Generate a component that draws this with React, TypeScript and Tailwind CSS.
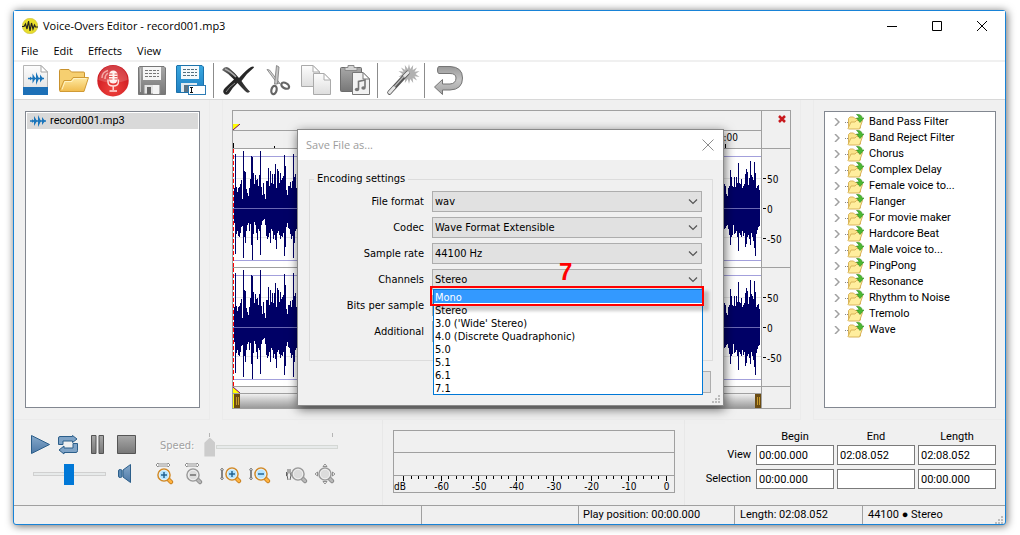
import React, { useState } from 'react';

const effects = [
  'Band Pass Filter',
  'Band Reject Filter',
  'Chorus',
  'Complex Delay',
  'Female voice to...',
  'Flanger',
  'For movie maker',
  'Hardcore Beat',
  'Male voice to...',
  'PingPong',
  'Resonance',
  'Rhythm to Noise',
  'Tremolo',
  'Wave',
];

const channelOptions = [
  'Mono',
  'Stereo',
  "3.0 ('Wide' Stereo)",
  '4.0 (Discrete Quadraphonic)',
  '5.0',
  '5.1',
  '6.1',
  '7.1',
];

// Sample peaks above and below the zero line, one per pixel column
const headUp = [
  0, 20, 54, 21, 16, 20, 21, 24, 28, 9, 57, 37, 36, 19, 15, 12, 20, 29, 52, 51, 35, 24, 33, 28, 29, 22, 33, 57, 21, 13,
  25, 14, 9, 27, 27, 40, 22, 37, 25, 34, 24, 34, 44, 20, 39, 37, 25, 35, 28, 30, 32, 53, 42, 18, 13, 22, 22, 26, 20,
  27, 54, 31, 34, 20, 18,
];
const headDown = [
  0, 14, 45, 25, 22, 27, 28, 24, 18, 17, 49, 28, 34, 22, 16, 14, 22, 15, 36, 51, 25, 13, 16, 24, 31, 20, 22, 46, 16,
  12, 11, 10, 16, 27, 30, 28, 24, 34, 20, 22, 30, 26, 31, 40, 24, 22, 26, 30, 27, 28, 24, 47, 38, 18, 14, 19, 20, 25,
  30, 27, 49, 34, 22, 20, 18,
];
const tailUp = [
  28, 24, 22, 14, 12, 20, 22, 38, 31, 22, 21, 31, 21, 31, 25, 45, 25, 24, 29, 20, 22, 24, 34, 39, 36, 23, 30, 47, 33,
  31, 28, 46, 35, 20, 22, 23, 18,
];
const tailDown = [
  28, 20, 19, 17, 16, 20, 26, 36, 28, 26, 16, 25, 24, 22, 28, 42, 24, 26, 28, 22, 27, 24, 38, 35, 28, 26, 30, 36, 24,
  28, 32, 39, 47, 25, 21, 18, 17,
];

const buildWave = () => {
  const bars: [number, number][] = [];
  const total = 527;
  for (let i = 0; i < total; i++) {
    const fromEnd = i - (total - tailUp.length);
    if (i < headUp.length) {
      bars.push([headUp[i], headDown[i]]);
    } else if (fromEnd >= 0) {
      bars.push([tailUp[fromEnd], tailDown[fromEnd]]);
    } else {
      bars.push([headUp[1 + ((i * 7) % 63)], headDown[1 + ((i * 5) % 63)]]);
    }
  }
  return bars.map(([up, down], i) => `M${i + 0.5} ${59 - up}V${60 + down}`).join('');
};

const wavePath = buildWave();

const Waveform: React.FC = () => (
  <svg
    className="block h-full w-full"
    viewBox="0 0 528 118"
    preserveAspectRatio="none"
    shapeRendering="crispEdges"
  >
    <rect width="528" height="118" fill="#fff" />
    <path d="M0 29.5H528M0 88.5H528" stroke="#e8e8e8" />
    <path d="M0 7.5H528M0 111.5H528" stroke="#a3a0dc" />
    <path d={wavePath} stroke="#000066" />
    <path d="M0 59.5H527" stroke="#6a68b4" />
    <path d="M0.5 0V118" stroke="#ff0000" strokeDasharray="4 2" />
  </svg>
);

const ScaleLabels: React.FC = () => (
  <div className="flex h-full flex-col justify-center">
    {['50', '0', '-50'].map((label) => (
      <div key={label} className="flex h-[30px] items-center gap-px">
        <span className="h-px w-[3px] bg-black" />
        <span className="pt-1 leading-3">{label}</span>
      </div>
    ))}
  </div>
);

const SoundGlyph: React.FC<{ className?: string }> = ({ className }) => (
  <svg className={className} viewBox="0 0 16 12">
    <path d="M0 6h16" stroke="#1a75bb" strokeWidth="1.500" />
    <path d="M2 4l2 2-2 2zM4 1l3 5-3 5zM8 0l3 6-3 6zM12 2l3 4-3 4z" fill="#1a75bb" />
  </svg>
);

const Gradients: React.FC = () => (
  <svg className="absolute h-0 w-0" aria-hidden="true">
    <defs>
      <linearGradient id="folder" x1="0" y1="0" x2="0" y2="1">
        <stop offset="0" stopColor="#ffeaa3" />
        <stop offset="1" stopColor="#f0bb4d" />
      </linearGradient>
      <linearGradient id="metal" x1="0" y1="0" x2="0" y2="1">
        <stop offset="0" stopColor="#a8a8a8" />
        <stop offset="1" stopColor="#777" />
      </linearGradient>
      <linearGradient id="silver" x1="0" y1="0" x2="0" y2="1">
        <stop offset="0" stopColor="#9a9a9a" />
        <stop offset="0.500" stopColor="#c4c4c4" />
        <stop offset="1" stopColor="#a2a2a2" />
      </linearGradient>
      <linearGradient id="blueDisk" x1="0" y1="0" x2="0" y2="1">
        <stop offset="0" stopColor="#3aa8e0" />
        <stop offset="1" stopColor="#1f7fc2" />
      </linearGradient>
      <linearGradient id="paper" x1="0" y1="0" x2="0" y2="1">
        <stop offset="0" stopColor="#fdfdfd" />
        <stop offset="1" stopColor="#dedede" />
      </linearGradient>
      <linearGradient id="steel" x1="0" y1="0" x2="0" y2="1">
        <stop offset="0" stopColor="#87aacb" />
        <stop offset="1" stopColor="#4d78a6" />
      </linearGradient>
      <linearGradient id="dark" x1="0" y1="0" x2="1" y2="1">
        <stop offset="0" stopColor="#777" />
        <stop offset="0.400" stopColor="#222" />
        <stop offset="1" stopColor="#444" />
      </linearGradient>
      <radialGradient id="red" cx="0.500" cy="0.750" r="0.700">
        <stop offset="0" stopColor="#f0453f" />
        <stop offset="1" stopColor="#c9141c" />
      </radialGradient>
    </defs>
  </svg>
);

const NewIcon = (
  <>
    <path d="M4.500 0.500H22L28.500 7V29.500H4.500Z" fill="url(#paper)" stroke="#b5b5b5" />
    <path d="M22 0.500V7H28.500Z" fill="#fff" stroke="#a5a5a5" />
    <path d="M4 22H29V30H4Z" fill="#1d70b7" />
    <path d="M9 13.500H25" stroke="#1a75bb" strokeWidth="1.500" />
    <path d="M11 11.500l2 2-2 2zM13.500 8.500l3 5-3 5zM17 7l3 6.500-3 6.500zM21 9.500l3 4-3 4z" fill="#1a75bb" />
  </>
);

const FolderIcon = (
  <>
    <path d="M1.500 25V5.500Q1.500 4.500 2.500 4.500H11L13.500 7H25.500Q26.500 7 26.500 8V12" fill="#f6cf70" stroke="#c9922e" />
    <path d="M1.500 26L6 15.500H13L15 12.500H30.500L26 26.500H2Z" fill="url(#folder)" stroke="#d09a35" />
    <path d="M4 24.500L7 16.500H14L16 13.500H28" fill="none" stroke="#fff3c4" />
  </>
);

const RecordIcon = (
  <>
    <circle cx="16" cy="15.700" r="15.700" fill="url(#red)" />
    <path d="M1.500 15A14.500 14.500 0 0 1 30.500 15Q16 21 1.500 15Z" fill="#fff" opacity="0.180" />
    <rect x="12" y="5.500" width="8.500" height="13" rx="4.200" fill="#fff3f0" />
    <path d="M12 9h3.500M17.500 9h3M12 11.500h3.500M17.500 11.500h3M12 14h3.500M17.500 14h3" stroke="#e0504c" />
    <path d="M11 14.500v2.500q0 4 5.200 4t5.200-4v-2.500M16.200 21v4M12.500 26h7.500" stroke="#ffe2df" strokeWidth="1.400" fill="none" />
    <path d="M5 13Q5 7 11 5.500M8 14Q8 10 11 8" stroke="#f5a9a5" strokeWidth="1.500" fill="none" />
  </>
);

const SaveIcon = (
  <>
    <path d="M3.500 1.500H28L29.500 3V29.500H2.500V2.500Z" fill="url(#metal)" stroke="#777" />
    <rect x="7" y="2" width="18" height="13" fill="#f6f6f6" />
    <path d="M9 5.500h14M9 8.500h14M9 11.500h14" stroke="#777" strokeDasharray="3 1" />
    <path d="M8 29V19.500H24V29Z" fill="#e3e3e3" stroke="#888" />
    <rect x="11" y="22" width="4" height="7" fill="#666" />
    <path d="M17 29V20H23V29Z" fill="#f4f4f4" />
    <path d="M4.500 27V3.500" stroke="#c2c2c2" />
  </>
);

const SaveAsIcon = (
  <>
    <path d="M2 0.500H27L28.500 2V27.500H1.500V1Z" fill="url(#blueDisk)" stroke="#1c72ab" />
    <rect x="6" y="1" width="18" height="13" fill="#f4f9fc" />
    <path d="M8 4.500h14M8 7.500h14M8 10.500h14" stroke="#54707f" strokeDasharray="3 1" />
    <path d="M6 27V18H22V27Z" fill="#dfe9ef" />
    <rect x="9" y="20" width="4" height="7" fill="#5b7383" />
    <rect x="13.500" y="20.500" width="17" height="9" fill="#fff" stroke="#2d7cb5" />
    <path d="M15 22.500h3M15 27.500h3M16.500 22.500v5" stroke="#111" />
  </>
);

const DeleteIcon = (
  <>
    <path
      d="M0 5Q3 0 7 3Q12 7 17 13Q24 5 29 2Q32 1 32 2.500Q25 8 19.500 16Q24 23 28 26.500Q26 29 23 26Q19 22 15.500 18Q10 23 7 28.500Q4 31 2 28.500Q0 26 3 23Q7 19 12 14.500Q6 8 0 5Z"
      fill="url(#dark)"
    />
    <path d="M3 4Q8 6 14 12" stroke="#aaa" strokeWidth="1.500" fill="none" />
    <path d="M4 27Q7 22 13 18" stroke="#888" fill="none" />
  </>
);

const CutIcon = (
  <>
    <path d="M6 4.500L8.500 5L19 18.500L16 18Z" fill="#d5d5d5" stroke="#777" strokeWidth="0.800" />
    <path d="M15.500 0.500L18 2L16.500 19L13.500 19Z" fill="#c7c7c7" stroke="#777" strokeWidth="0.800" />
    <ellipse cx="13" cy="25" rx="2.600" ry="4.200" fill="none" stroke="#666" strokeWidth="2.200" transform="rotate(12 13 25)" />
    <ellipse cx="24.500" cy="20.500" rx="4.200" ry="2.600" fill="none" stroke="#666" strokeWidth="2.200" transform="rotate(28 24 20)" />
  </>
);

const CopyIcon = (
  <>
    <path d="M1.500 0.500H13L19.500 7V21.500H1.500Z" fill="url(#paper)" stroke="#aaa" />
    <path d="M13 0.500V7H19.500Z" fill="#fff" stroke="#aaa" />
    <path d="M13.500 8.500H24L30.500 15V29.500H13.500Z" fill="url(#paper)" stroke="#aaa" />
    <path d="M24 8.500V15H30.500Z" fill="#fff" stroke="#aaa" />
  </>
);

const PasteIcon = (
  <>
    <rect x="1.500" y="2.500" width="21" height="24" rx="1" fill="url(#metal)" stroke="#6d6d6d" />
    <path d="M6 5.500V2.500H9V0.500H15V2.500H18V5.500Z" fill="#d4d4d4" stroke="#888" />
    <path d="M13.500 7.500H24L30.500 14V29.500H13.500Z" fill="#f2f2f2" stroke="#777" />
    <path d="M24 7.500V14H30.500Z" fill="#fff" stroke="#777" />
    <path d="M19.500 24V16.500L26 15V22.500" stroke="#777" strokeWidth="1.600" fill="none" />
    <ellipse cx="18" cy="24.500" rx="2.200" ry="1.700" fill="#777" />
    <ellipse cx="24.500" cy="23" rx="2.200" ry="1.700" fill="#777" />
  </>
);

const WandIcon = (
  <>
    <path
      d="M23 -1l1.200 5 3-4-.5 5 4.300-2.500-2.500 4.200 5-.7-4 3 4 3-5-.7 2.500 4.200-4.300-2.500.5 5-3-4-1.200 5-1.200-5-3 4 .5-5-4.300 2.500 2.500-4.200-5 .7 4-3-4-3 5 .7-2.500-4.200 4.300 2.500-.5-5 3 4z"
      fill="#b2b2b2"
    />
    <path d="M3.500 27.500L21.500 8" stroke="#555" strokeWidth="4.500" strokeLinecap="round" />
    <path d="M3.500 27.500L8 22.500M18.500 11L22 7.500" stroke="#e6e6e6" strokeWidth="3" strokeLinecap="round" />
    <path d="M8.500 21.500L18 11" stroke="#bbb" strokeWidth="1.200" />
  </>
);

const UndoIcon = (
  <path
    d="M6 1.500H17Q29.500 2 29.500 13Q29.500 24.500 17 25H9.500V29.500L1.500 22L9.500 14.500V19H17Q23 18.500 23 13Q23 8.500 17 8.500H6Q4.500 8.500 4.500 5Q4.500 1.500 6 1.500Z"
    fill="url(#silver)"
    stroke="#757575"
  />
);

const SmallSpeakerIcon = (
  <svg className="h-5 w-4" viewBox="0 0 16 20">
    <path d="M5 6L12.500 0.500V18.500L5 13Z" fill="url(#steel)" stroke="#2b5e8a" />
    <rect x="0.500" y="5.500" width="3.500" height="8" rx="1.500" fill="#5f8bb4" stroke="#2b5e8a" />
  </svg>
);

interface LensProps {
  active?: boolean;
  sign?: 'plus' | 'minus';
  arrow?: 'horizontal' | 'vertical' | 'wave' | 'around';
}

const LensIcon: React.FC<LensProps> = ({ active, sign, arrow }) => {
  const ring = active ? '#d28a28' : '#9b9b9b';
  const cx = arrow === 'horizontal' ? 8 : arrow === 'around' ? 10 : 12;
  const cy = arrow === 'horizontal' ? 11 : 10;
  return (
    <svg className="h-5 w-[21px] overflow-visible" viewBox="0 0 21 20">
      {arrow === 'horizontal' && (
        <path d="M0 1L2 -1V0H12V-1L14 1L12 3V2H2V3Z" fill="#fff" stroke="#777" strokeWidth="0.800" />
      )}
      {arrow === 'vertical' && (
        <path d="M2 4L3.500 6H2.500V14H3.500L2 16L.5 14H1.500V6H.5Z" fill="#fff" stroke="#666" strokeWidth="0.800" />
      )}
      {arrow === 'wave' && (
        <path d="M.5 8v4M2 5v4l-1 2 1 5M4 5v4l1 2-1 5M6 8v4" stroke="#555" fill="none" strokeWidth="0.900" />
      )}
      {arrow === 'around' && (
        <path
          d="M8 2.500L10 0l2 2.500zM8 17.500l2 2.500 2-2.500zM2.500 8L0 10l2.500 2zM17.500 8l2.500 2-2.500 2z"
          fill="#fff"
          stroke="#777"
          strokeWidth="0.800"
        />
      )}
      <path d={`M${cx + 5} ${cy + 5}l2 2`} stroke={active ? '#c87f20' : '#8a8a8a'} strokeWidth="4.500" strokeLinecap="round" />
      <path d={`M${cx + 5} ${cy + 5}l2 2`} stroke={active ? '#ffb340' : '#b8b8b8'} strokeWidth="2.500" strokeLinecap="round" />
      <circle cx={cx} cy={cy} r="6" fill={active ? '#b4e4ff' : '#dcdcdc'} stroke={ring} strokeWidth="1.600" />
      <circle cx={cx} cy={cy} r="4.800" fill="none" stroke="#f6f6f6" strokeWidth="0.800" />
      {sign && <path d={`M${cx - 3} ${cy}h6`} stroke={active ? '#1c5c8c' : '#666'} strokeWidth="1.400" />}
      {sign === 'plus' && <path d={`M${cx} ${cy - 3}v6`} stroke="#1c5c8c" strokeWidth="1.400" />}
    </svg>
  );
};

interface ToolButtonProps {
  label: string;
  children: React.ReactNode;
}

const ToolButton: React.FC<ToolButtonProps> = ({ label, children }) => (
  <button type="button" aria-label={label} className="w-[39px] shrink-0 pt-px pl-[3px]">
    <svg className="block h-8 w-8 overflow-visible" viewBox="0 0 32 32">
      {children}
    </svg>
  </button>
);

const ToolDivider: React.FC = () => (
  <div className="flex w-2 shrink-0 py-px pl-0.5">
    <div className="w-px bg-[#8c8c8c]" />
  </div>
);

const Grip: React.FC = () => (
  <svg className="h-2 w-2" viewBox="0 0 8 8" fill="#bcbcbc">
    <path d="M6 0h2v2H6zM3 3h2v2H3zM6 3h2v2H6zM0 6h2v2H0zM3 6h2v2H3zM6 6h2v2H6z" />
  </svg>
);

interface FieldProps {
  id: string;
  label: string;
  options: string[];
  value?: string;
}

const SelectField: React.FC<FieldProps> = ({ id, label, options, value }) => (
  <>
    <label htmlFor={id} className="pt-px text-right">
      {label}
    </label>
    <div className="relative">
      <select
        id={id}
        defaultValue={value}
        className="block h-[21px] w-full appearance-none border border-[#adadad] bg-[#e1e1e1] px-0.5 pt-px outline-none"
      >
        {options.map((option) => (
          <option key={option}>{option}</option>
        ))}
      </select>
      <svg className="pointer-events-none absolute top-2 right-1 h-[6px] w-[10px]" viewBox="0 0 10 6">
        <path d="M1 0.500L5 4.500L9 0.500" fill="none" stroke="#555" strokeWidth="1.200" />
      </svg>
    </div>
  </>
);

const SaveDialog: React.FC = () => {
  const [channel, setChannel] = useState('Mono');

  return (
    <div
      role="dialog"
      aria-label="Save File as..."
      className="absolute top-[118px] left-[283px] flex h-[277px] w-[427px] flex-col border border-[#8a8a8a] bg-[#f0f0f0] font-['DejaVu_Sans_Condensed','Noto_Sans',sans-serif] text-[11px] shadow-[1px_3px_10px_rgba(0,0,0,0.6)]"
    >
      <div className="flex h-[30px] items-center justify-between bg-white pr-[9px] pl-2">
        <h2 className="font-['Open_Sans',sans-serif] text-[#9c9c9c]">Save File as...</h2>
        <button type="button" aria-label="Close dialog">
          <svg className="h-3 w-3" viewBox="0 0 12 12">
            <path d="M0.500 0.500L11.500 11.500M11.500 0.500L0.500 11.500" stroke="#8c8c8c" />
          </svg>
        </button>
      </div>

      <fieldset className="mr-[10px] ml-[11px] mt-[11px] border border-[#dcdcdc] pr-[10px] pb-[18px]">
        <legend className="ml-1 px-[3px] leading-4">Encoding settings</legend>
        <div className="mt-1 grid grid-cols-[114px_1fr] items-center gap-x-2 gap-y-[5px]">
          <SelectField id="format" label="File format" options={['wav', 'mp3']} />
          <SelectField id="codec" label="Codec" options={['Wave Format Extensible']} />
          <SelectField id="rate" label="Sample rate" options={['44100 Hz', '48000 Hz']} />
          <SelectField id="channels" label="Channels" options={channelOptions} value="Stereo" />
          <SelectField id="bits" label="Bits per sample" options={['16']} />
          <SelectField id="additional" label="Additional" options={['None']} />
        </div>
      </fieldset>

      <div className="mt-[10px] flex justify-end pr-3">
        <button type="button" className="h-[22px] w-[75px] border border-[#adadad] bg-[#e1e1e1]">
          Cancel
        </button>
      </div>
      <div className="absolute right-[3px] bottom-0.5">
        <Grip />
      </div>

      {/* Opened channel list */}
      <ul
        role="listbox"
        aria-label="Channels"
        className="absolute top-[159px] left-[135px] w-[270px] border border-[#0078d7] bg-white"
      >
        {channelOptions.map((option) => (
          <li
            key={option}
            role="option"
            aria-selected={option === channel}
            onClick={() => setChannel(option)}
            className={`h-[13px] px-px leading-[15px] ${option === channel ? 'bg-[#3399ff] text-white' : 'text-black'}`}
          >
            {option}
          </li>
        ))}
      </ul>
      <div className="pointer-events-none absolute top-[156px] left-[132px] h-5 w-[274px] border-2 border-[#ff0000] shadow-[5px_5px_3px_rgba(0,0,0,0.2)]" />
      <span className="absolute top-[130px] left-[261px] font-['Liberation_Sans',sans-serif] text-2xl leading-6 font-bold text-[#ff0000]">
        7
      </span>
    </div>
  );
};

const TitleBar: React.FC = () => (
  <header className="bg-white font-['Open_Sans',sans-serif] text-[11px]">
    <div className="flex h-[30px] items-center">
      <svg className="ml-2 h-4 w-4" viewBox="0 0 16 16">
        <circle cx="8" cy="8" r="7.700" fill="#e8de2b" stroke="#c9c04a" strokeWidth="0.600" />
        <path d="M0 8.500h2L3.500 6l1.500 5L6.500 3l1.500 10L9.500 5l1.500 6 1.500-4L13.500 9H16" stroke="#222" strokeWidth="1.200" fill="none" />
      </svg>
      <h1 className="ml-[5px] flex-1">Voice-Overs Editor - record001.mp3</h1>
      <button type="button" aria-label="Minimize" className="flex w-[45px] justify-center">
        <svg className="h-[10px] w-[10px]" viewBox="0 0 10 10">
          <path d="M0 5.500H10" stroke="#000" />
        </svg>
      </button>
      <button type="button" aria-label="Maximize" className="flex w-[45px] justify-center">
        <svg className="h-[10px] w-[10px]" viewBox="0 0 10 10">
          <path d="M0.500 0.500H9.500V9.500H0.500Z" fill="none" stroke="#000" />
        </svg>
      </button>
      <button type="button" aria-label="Close" className="flex w-[46px] justify-center">
        <svg className="h-[10px] w-[10px]" viewBox="0 0 10 10">
          <path d="M0 0L10 10M10 0L0 10" stroke="#000" />
        </svg>
      </button>
    </div>
    <nav className="flex h-[21px] items-center gap-[15px] border-b-2 border-[#f0f0f0] pt-px pl-[7px]">
      {['File', 'Edit', 'Effects', 'View'].map((item) => (
        <button key={item} type="button">
          {item}
        </button>
      ))}
    </nav>
  </header>
);

const Toolbar: React.FC = () => (
  <div className="flex h-[38px] border-b border-[#d8d8d8] bg-white pl-0.5">
    <ToolButton label="New">{NewIcon}</ToolButton>
    <ToolButton label="Open">{FolderIcon}</ToolButton>
    <ToolButton label="Record">{RecordIcon}</ToolButton>
    <ToolButton label="Save">{SaveIcon}</ToolButton>
    <ToolButton label="Save as">{SaveAsIcon}</ToolButton>
    <ToolDivider />
    <ToolButton label="Delete">{DeleteIcon}</ToolButton>
    <ToolButton label="Cut">{CutIcon}</ToolButton>
    <ToolButton label="Copy">{CopyIcon}</ToolButton>
    <ToolButton label="Paste">{PasteIcon}</ToolButton>
    <ToolDivider />
    <ToolButton label="Effects wizard">{WandIcon}</ToolButton>
    <ToolDivider />
    <ToolButton label="Undo">{UndoIcon}</ToolButton>
  </div>
);

const ScrollHandle: React.FC = () => (
  <div className="flex w-[6px] justify-center gap-px bg-[#6b4c12] py-[3px]">
    <div className="w-px bg-[#c79a2a]" />
    <div className="w-px bg-[#c79a2a]" />
  </div>
);

const Editor: React.FC = () => (
  <div className="flex w-full border border-[#a0a0a0] font-['DejaVu_Sans_Condensed',sans-serif] text-[10px]">
    <div className="flex min-w-0 flex-1 flex-col border-r border-[#a0a0a0]">
      <div className="flex h-5 items-end border-b border-[#a0a0a0]">
        <svg className="h-[6px] w-[7px]" viewBox="0 0 7 6">
          <path d="M0 0H7L0 6Z" fill="#ffff00" />
          <path d="M7 0L0 6" stroke="#800060" />
        </svg>
      </div>
      <div className="flex h-[18px] items-end justify-between border-b border-[#a0a0a0] pr-[23px]">
        <div className="flex items-end gap-10">
          <span className="h-[5px] w-px bg-black" />
          <span className="h-0.5 w-px bg-black" />
        </div>
        <div className="flex flex-col items-center">
          <span className="leading-[13px]">02:00</span>
          <span className="h-1 w-px bg-black" />
        </div>
      </div>
      <div className="min-h-0 flex-1">
        <Waveform />
      </div>
      <div className="min-h-0 flex-1 border-t border-[#a0a0a0]">
        <Waveform />
      </div>
      <div className="h-[7px] border-t border-[#a0a0a0]">
        <svg className="block h-[6px] w-[7px]" viewBox="0 0 7 6">
          <path d="M0 0L7 6H0Z" fill="#ffff00" />
          <path d="M0 0L7 6" stroke="#800060" />
        </svg>
      </div>
      <div className="flex h-[15px] justify-between border-t border-[#a0a0a0] bg-linear-to-b from-[#f0f0f0] to-[#9a9a9a]">
        <div className="flex">
          <div className="w-px bg-[#ffff00]" />
          <ScrollHandle />
        </div>
        <ScrollHandle />
      </div>
    </div>
    <div className="flex w-7 flex-col">
      <div className="flex h-[38px] justify-center border-b border-[#a0a0a0] pt-1 pl-3">
        <button type="button" aria-label="Close track" className="h-2">
          <svg className="block h-2 w-2" viewBox="0 0 8 8">
            <path d="M1 1L7 7M7 1L1 7" stroke="#c8191e" strokeWidth="2.500" />
          </svg>
        </button>
      </div>
      <div className="min-h-0 flex-1 pl-px">
        <ScaleLabels />
      </div>
      <div className="min-h-0 flex-1 border-t border-[#a0a0a0] pl-px">
        <ScaleLabels />
      </div>
      <div className="h-[22px] border-t border-[#a0a0a0]" />
    </div>
  </div>
);

const EffectsTree: React.FC = () => (
  <ul className="w-full border border-[#828790] bg-white pt-0.5">
    {effects.map((effect) => (
      <li key={effect} className="flex h-4 items-center pl-[9px]">
        <svg className="h-2 w-[6px]" viewBox="0 0 6 8">
          <path d="M1 0L5 4L1 8" fill="none" stroke="#a0a0a0" strokeWidth="1.500" />
        </svg>
        <svg className="ml-1 h-4 w-5" viewBox="0 0 20 16">
          <path d="M1 8.500h1M3 8.500h1" stroke="#888" />
          <path d="M4.500 14V4.500L6 3H9.500L11 4.500H16.500V14Z" fill="#fbe38a" stroke="#d9b45a" />
          <path d="M4 14.500L7 8H11L12.500 6.500H18.500L15.500 15H4.500Z" fill="#ffee9e" stroke="#d9b45a" />
          <path d="M12.500 0.500Q18 0 18 4H20L16 8.500L12.500 4H15Q15 2 12.500 0.500Z" fill="#4cb832" stroke="#2d8c1e" strokeWidth="0.600" />
        </svg>
        <span className="ml-[5px]">{effect}</span>
      </li>
    ))}
  </ul>
);

const Transport: React.FC = () => (
  <div className="flex w-[368px] shrink-0 flex-col pt-3 pl-[17px]">
    <div className="flex h-[26px] items-center">
      <button type="button" aria-label="Play">
        <svg className="h-5 w-5" viewBox="0 0 20 20">
          <path d="M0.500 0.500L18.500 9.500L0.500 18.500Z" fill="url(#steel)" stroke="#2b5e8a" />
        </svg>
      </button>
      <button type="button" aria-label="Loop" className="ml-[7px]">
        <svg className="h-5 w-[21px]" viewBox="0 0 21 20">
          <path
            d="M0.500 9.500V3Q0.500 1.500 2 1.500H14.500V0.500L19 4L14.500 7.500V6H5V9.500ZM19.500 8.500V15.500Q19.500 17.500 18 17.500H6V19L1 15L6 11V13H15V8.500Z"
            fill="#7fa3c6"
            stroke="#2b5e8a"
          />
        </svg>
      </button>
      <button type="button" aria-label="Pause" className="ml-3">
        <svg className="h-5 w-[14px]" viewBox="0 0 14 20">
          <path d="M0.500 0.500H5V18.500H0.500ZM8 0.500H12.500V18.500H8Z" fill="url(#metal)" stroke="#555" />
        </svg>
      </button>
      <button type="button" aria-label="Stop" className="ml-3">
        <svg className="h-5 w-5" viewBox="0 0 20 20">
          <path d="M0.500 0.500H18.500V18.500H0.500Z" fill="url(#metal)" stroke="#555" />
        </svg>
      </button>
      <label
        htmlFor="speed"
        className="ml-[23px] pt-0.5 font-['DejaVu_Sans_Condensed',sans-serif] text-[11px] text-[#a0a0a0] [text-shadow:1px_1px_0_white]"
      >
        Speed:
      </label>
      <div className="ml-[10px] flex w-[134px] flex-col">
        <div className="flex justify-between px-[5px]">
          <span className="h-1 w-px bg-[#b5b5b5]" />
          <span className="h-1 w-px bg-[#b5b5b5]" />
        </div>
        <div className="relative flex items-center">
          <div className="absolute right-0 left-3 h-1 border border-[#d4d7d4] bg-[#e7eaea]" />
          <input
            id="speed"
            type="range"
            min="0"
            max="100"
            defaultValue="0"
            disabled
            className="relative h-5 w-full appearance-none bg-transparent [&::-webkit-slider-thumb]:h-[19px] [&::-webkit-slider-thumb]:w-[11px] [&::-webkit-slider-thumb]:appearance-none [&::-webkit-slider-thumb]:bg-[#cccccc] [&::-webkit-slider-thumb]:[clip-path:polygon(50%_0,100%_28%,100%_100%,0_100%,0_28%)]"
          />
        </div>
      </div>
    </div>
    <div className="mt-[5px] flex h-[22px] items-center">
      <div className="relative ml-0.5 flex w-[73px] items-center">
        <div className="absolute inset-x-0 h-1 border border-[#d0d0d0] bg-[#e7eaea]" />
        <input
          type="range"
          aria-label="Volume"
          min="0"
          max="100"
          defaultValue="49"
          className="relative h-[21px] w-full appearance-none bg-transparent [&::-webkit-slider-thumb]:h-[21px] [&::-webkit-slider-thumb]:w-[10px] [&::-webkit-slider-thumb]:appearance-none [&::-webkit-slider-thumb]:bg-[#0078d7]"
        />
      </div>
      <button type="button" aria-label="Mute" className="ml-3">
        {SmallSpeakerIcon}
      </button>
      <div className="ml-[22px] flex flex-1 gap-2">
        <button type="button" aria-label="Zoom in time">
          <LensIcon active sign="plus" arrow="horizontal" />
        </button>
        <button type="button" aria-label="Zoom out time">
          <LensIcon sign="minus" arrow="horizontal" />
        </button>
        <button type="button" aria-label="Zoom in level" className="ml-[6px]">
          <LensIcon active sign="plus" arrow="vertical" />
        </button>
        <button type="button" aria-label="Zoom out level">
          <LensIcon active sign="minus" arrow="vertical" />
        </button>
        <button type="button" aria-label="Zoom to selection" className="ml-2">
          <LensIcon arrow="wave" />
        </button>
        <button type="button" aria-label="Zoom to fit">
          <LensIcon arrow="around" />
        </button>
      </div>
    </div>
  </div>
);

const levelTicks = Array.from({ length: 36 }, (_, i) => {
  const x = Math.round(9 + i * 7.5) + 0.5;
  return `M${x} 0V${i % 5 === 0 ? 5 : 3}`;
}).join('');

const LevelMeter: React.FC = () => (
  <div className="min-w-0 flex-1 border-x border-[#e8e8e8] pt-[10px] pr-[9px] pl-[10px]">
    <div className="border border-[#a0a0a0]">
      <div className="h-[22px] border-b border-[#a0a0a0]" />
      <div className="h-[23px] border-b border-[#a0a0a0]" />
      <svg className="block h-[5px] w-full" viewBox="0 0 280 5" preserveAspectRatio="none" shapeRendering="crispEdges">
        <path d={levelTicks} stroke="#000" />
      </svg>
      <div className="flex h-[11px] items-center pr-[7px] font-['DejaVu_Sans_Condensed',sans-serif] text-[10px] leading-[11px]">
        <span className="w-[47px]">dB</span>
        <div className="flex flex-1 justify-between">
          {['-60', '-50', '-40', '-30', '-20', '-10', '0'].map((level) => (
            <span key={level} className="flex w-px justify-center">
              {level}
            </span>
          ))}
        </div>
      </div>
    </div>
  </div>
);

const timeRows = [
  { name: 'View', values: ['00:00.000', '02:08.052', '02:08.052'] },
  { name: 'Selection', values: ['00:00.000', '', '00:00.000'] },
];
const timeColumns = ['Begin', 'End', 'Length'];

const TimeFields: React.FC = () => (
  <div className="grid w-[320px] shrink-0 grid-cols-[1fr_78px_78px_78px] content-start items-center gap-x-[3px] gap-y-1 pt-[9px] pr-[9px]">
    <span />
    {timeColumns.map((column) => (
      <span key={column} className="h-3 text-center leading-4">
        {column}
      </span>
    ))}
    {timeRows.map((row) => (
      <React.Fragment key={row.name}>
        <span className="pr-0.5 text-right">{row.name}</span>
        {row.values.map((value, i) => (
          <input
            key={timeColumns[i]}
            type="text"
            aria-label={`${row.name} ${timeColumns[i]}`}
            defaultValue={value}
            className="h-5 w-full border border-[#7a7a7a] bg-white px-0.5 outline-none"
          />
        ))}
      </React.Fragment>
    ))}
  </div>
);

const StatusBar: React.FC = () => (
  <footer className="flex h-[19px] border-t border-[#a0a0a0] leading-[18px]">
    <div className="flex-1" />
    <div className="w-[157px] border-l border-[#a0a0a0]" />
    <div className="w-[156px] border-l border-[#a0a0a0] pl-1">Play position: 00:00.000</div>
    <div className="w-32 border-l border-[#a0a0a0] pl-[5px]">Length: 02:08.052</div>
    <div className="flex w-[143px] items-end justify-between border-l border-[#a0a0a0] pr-0.5 pl-[5px]">
      <span>44100 ● Stereo</span>
      <Grip />
    </div>
  </footer>
);

const App: React.FC = () => {
  return (
    <div className="flex min-h-screen bg-white pt-[10px] pr-[14px] pb-[10px] pl-[13px] text-black">
      <Gradients />
      <main className="relative flex min-w-0 flex-1 flex-col rounded-[3px] border border-[#1883d7] bg-[#f0f0f0] font-['Roboto','Liberation_Sans',sans-serif] text-[11px] shadow-[1px_1px_8px_rgba(0,0,0,0.6)]">
        <TitleBar />
        <Toolbar />

        <div className="flex flex-1">
          <section className="flex w-[196px] shrink-0 border-r border-b border-[#ebebeb] py-[11px] pr-[9px] pl-[11px]">
            <ul className="w-full border border-[#828790] bg-white p-px">
              <li className="flex h-4 items-center gap-1 bg-[#d9d9d9] pl-[3px]">
                <SoundGlyph className="h-3 w-4" />
                record001.mp3
              </li>
            </ul>
          </section>
          <section className="mx-3 flex min-w-0 flex-1 border-x border-b border-[#ebebeb] px-[9px] py-[10px]">
            <Editor />
          </section>
          <section className="flex w-48 shrink-0 border-b border-l border-[#ebebeb] py-[11px] pr-[9px] pl-[10px]">
            <EffectsTree />
          </section>
        </div>

        <div className="flex h-[85px]">
          <Transport />
          <LevelMeter />
          <TimeFields />
        </div>

        <StatusBar />
        <SaveDialog />
      </main>
    </div>
  );
};

export default App;
